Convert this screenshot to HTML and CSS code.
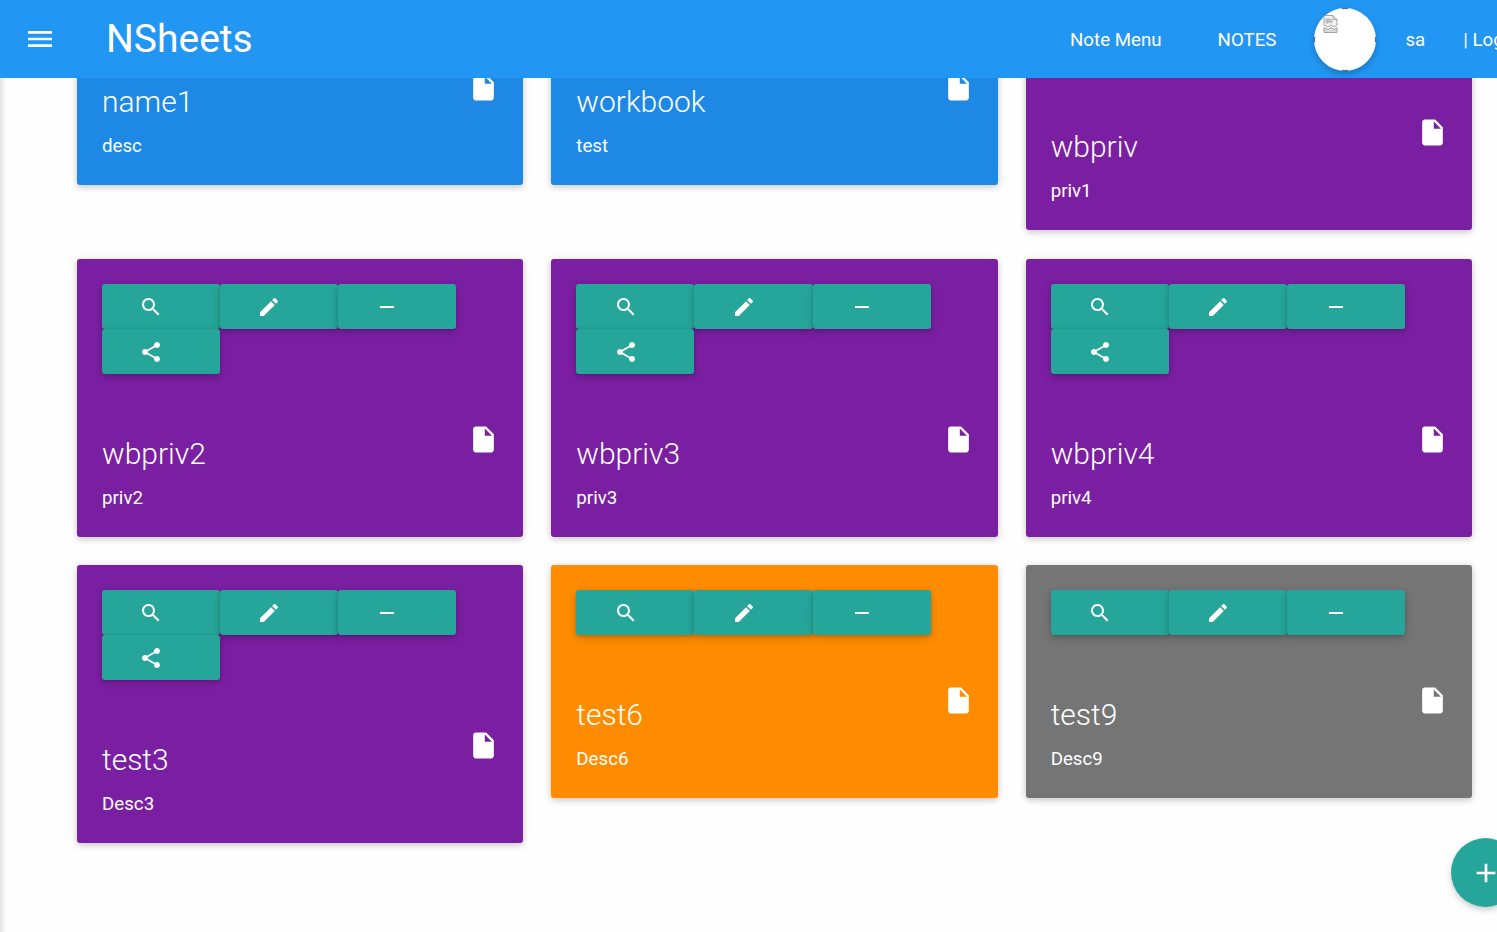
FILE: index.html
```html
<!DOCTYPE html>
<html lang="en">
<head>
  <meta charset="UTF-8">
  <title>NSheets</title>
  <link rel="stylesheet" href="styles.css">
</head>
<body>

  <svg class="icon-defs" width="0" height="0">
    <symbol id="i-menu" viewBox="0 0 24 24"><path d="M3 18h18v-2H3v2zm0-5h18v-2H3v2zm0-7v2h18V6H3z"/></symbol>
    <symbol id="i-search" viewBox="0 0 24 24"><path d="M15.5 14h-.79l-.28-.27C15.41 12.59 16 11.11 16 9.5 16 5.91 13.09 3 9.5 3S3 5.91 3 9.5 5.91 16 9.5 16c1.61 0 3.09-.59 4.23-1.57l.27.28v.79l5 4.99L20.49 19l-4.99-5zm-6 0C7.01 14 5 11.99 5 9.5S7.01 5 9.5 5 14 7.01 14 9.5 11.99 14 9.5 14z"/></symbol>
    <symbol id="i-edit" viewBox="0 0 24 24"><path d="M3 17.25V21h3.75L17.81 9.94l-3.75-3.75L3 17.25zM20.71 7.04c.39-.39.39-1.02 0-1.41l-2.34-2.34c-.39-.39-1.02-.39-1.41 0l-1.83 1.83 3.75 3.75 1.83-1.83z"/></symbol>
    <symbol id="i-remove" viewBox="0 0 24 24"><path d="M19 13H5v-2h14v2z"/></symbol>
    <symbol id="i-share" viewBox="0 0 24 24"><path d="M18 16.08c-.76 0-1.44.3-1.96.77L8.91 12.7c.05-.23.09-.46.09-.7s-.04-.47-.09-.7l7.05-4.11c.54.5 1.25.81 2.04.81 1.66 0 3-1.34 3-3s-1.34-3-3-3-3 1.34-3 3c0 .24.04.47.09.7L8.04 9.81C7.5 9.31 6.79 9 6 9c-1.66 0-3 1.34-3 3s1.34 3 3 3c.79 0 1.5-.31 2.04-.81l7.12 4.16c-.05.21-.08.43-.08.65 0 1.61 1.31 2.92 2.92 2.92 1.61 0 2.92-1.31 2.92-2.92s-1.31-2.92-2.92-2.92z"/></symbol>
    <symbol id="i-file" viewBox="0 0 24 24"><path d="M6 2c-1.1 0-1.99.9-1.99 2L4 20c0 1.1.89 2 1.99 2H18c1.1 0 2-.9 2-2V8l-6-6H6zm7 7V3.5L18.5 9H13z"/></symbol>
    <symbol id="i-add" viewBox="0 0 24 24"><path d="M19 13h-6v6h-2v-6H5v-2h6V5h2v6h6v2z"/></symbol>
  </svg>

  <header class="topbar">
    <button class="menu-btn"><svg class="icon-lg"><use href="#i-menu"/></svg></button>
    <div class="brand">NSheets</div>
    <nav class="topnav">
      <a class="nav-note">Note Menu</a>
      <a class="nav-notes">NOTES</a>
      <div class="avatar">
        <svg class="broken-img" viewBox="0 0 16 18">
          <path d="M1.5 .5h9l4 4v5.5l-3 2-3-2-3 2-4-2z" fill="#f4f4f4" stroke="#a2a2a2"/>
          <path d="M10.5 .5v4h4" fill="none" stroke="#a2a2a2"/>
          <path d="M3 3.5h5l2 2v3l-3-1-3 1.5-1-1z" fill="#bdbdbd"/>
          <path d="M1.5 12.5l4 2 3-2 3 2 3-2v5h-13z" fill="#dadada" stroke="#a2a2a2"/>
        </svg>
      </div>
      <a class="nav-user">sa</a>
      <a class="nav-logout">| Logout</a>
    </nav>
  </header>

  <main class="sheet-grid">

    <section class="card blue">
      <div class="card-actions">
        <button class="act"><svg class="icon"><use href="#i-search"/></svg></button>
        <button class="act"><svg class="icon"><use href="#i-edit"/></svg></button>
        <button class="act"><svg class="icon"><use href="#i-remove"/></svg></button>
      </div>
      <div class="card-body">
        <div><h3 class="card-title">name1</h3><p class="card-desc">desc</p></div>
        <svg class="file-icon"><use href="#i-file"/></svg>
      </div>
    </section>

    <section class="card blue">
      <div class="card-actions">
        <button class="act"><svg class="icon"><use href="#i-search"/></svg></button>
        <button class="act"><svg class="icon"><use href="#i-edit"/></svg></button>
        <button class="act"><svg class="icon"><use href="#i-remove"/></svg></button>
      </div>
      <div class="card-body">
        <div><h3 class="card-title">workbook</h3><p class="card-desc">test</p></div>
        <svg class="file-icon"><use href="#i-file"/></svg>
      </div>
    </section>

    <section class="card purple">
      <div class="card-actions">
        <button class="act"><svg class="icon"><use href="#i-search"/></svg></button>
        <button class="act"><svg class="icon"><use href="#i-edit"/></svg></button>
        <button class="act"><svg class="icon"><use href="#i-remove"/></svg></button>
        <button class="act"><svg class="icon"><use href="#i-share"/></svg></button>
      </div>
      <div class="card-body">
        <div><h3 class="card-title">wbpriv</h3><p class="card-desc">priv1</p></div>
        <svg class="file-icon"><use href="#i-file"/></svg>
      </div>
    </section>

    <section class="card purple">
      <div class="card-actions">
        <button class="act"><svg class="icon"><use href="#i-search"/></svg></button>
        <button class="act"><svg class="icon"><use href="#i-edit"/></svg></button>
        <button class="act"><svg class="icon"><use href="#i-remove"/></svg></button>
        <button class="act"><svg class="icon"><use href="#i-share"/></svg></button>
      </div>
      <div class="card-body">
        <div><h3 class="card-title">wbpriv2</h3><p class="card-desc">priv2</p></div>
        <svg class="file-icon"><use href="#i-file"/></svg>
      </div>
    </section>

    <section class="card purple">
      <div class="card-actions">
        <button class="act"><svg class="icon"><use href="#i-search"/></svg></button>
        <button class="act"><svg class="icon"><use href="#i-edit"/></svg></button>
        <button class="act"><svg class="icon"><use href="#i-remove"/></svg></button>
        <button class="act"><svg class="icon"><use href="#i-share"/></svg></button>
      </div>
      <div class="card-body">
        <div><h3 class="card-title">wbpriv3</h3><p class="card-desc">priv3</p></div>
        <svg class="file-icon"><use href="#i-file"/></svg>
      </div>
    </section>

    <section class="card purple">
      <div class="card-actions">
        <button class="act"><svg class="icon"><use href="#i-search"/></svg></button>
        <button class="act"><svg class="icon"><use href="#i-edit"/></svg></button>
        <button class="act"><svg class="icon"><use href="#i-remove"/></svg></button>
        <button class="act"><svg class="icon"><use href="#i-share"/></svg></button>
      </div>
      <div class="card-body">
        <div><h3 class="card-title">wbpriv4</h3><p class="card-desc">priv4</p></div>
        <svg class="file-icon"><use href="#i-file"/></svg>
      </div>
    </section>

    <section class="card purple">
      <div class="card-actions">
        <button class="act"><svg class="icon"><use href="#i-search"/></svg></button>
        <button class="act"><svg class="icon"><use href="#i-edit"/></svg></button>
        <button class="act"><svg class="icon"><use href="#i-remove"/></svg></button>
        <button class="act"><svg class="icon"><use href="#i-share"/></svg></button>
      </div>
      <div class="card-body">
        <div><h3 class="card-title">test3</h3><p class="card-desc">Desc3</p></div>
        <svg class="file-icon"><use href="#i-file"/></svg>
      </div>
    </section>

    <section class="card orange">
      <div class="card-actions">
        <button class="act"><svg class="icon"><use href="#i-search"/></svg></button>
        <button class="act"><svg class="icon"><use href="#i-edit"/></svg></button>
        <button class="act"><svg class="icon"><use href="#i-remove"/></svg></button>
      </div>
      <div class="card-body">
        <div><h3 class="card-title">test6</h3><p class="card-desc">Desc6</p></div>
        <svg class="file-icon"><use href="#i-file"/></svg>
      </div>
    </section>

    <section class="card grey">
      <div class="card-actions">
        <button class="act"><svg class="icon"><use href="#i-search"/></svg></button>
        <button class="act"><svg class="icon"><use href="#i-edit"/></svg></button>
        <button class="act"><svg class="icon"><use href="#i-remove"/></svg></button>
      </div>
      <div class="card-body">
        <div><h3 class="card-title">test9</h3><p class="card-desc">Desc9</p></div>
        <svg class="file-icon"><use href="#i-file"/></svg>
      </div>
    </section>

  </main>

  <button class="fab"><svg class="icon-lg"><use href="#i-add"/></svg></button>

</body>
</html>
```

FILE: styles.css
```css
html, body {
  margin: 0;
  height: 100%;
  overflow: hidden;
}
body {
  font-family: Roboto, "Liberation Sans", sans-serif;
  background: #fefefe;
  color: #fff;
  box-shadow: inset 6px 0 4px -3px #e2e2e2;
}
button {
  border: 0;
  padding: 0;
  color: inherit;
  font: inherit;
}
svg {
  fill: currentColor;
  display: block;
}
.icon-defs {
  position: absolute;
}
.icon {
  width: 24px;
  height: 24px;
}
.icon-lg {
  width: 32px;
  height: 32px;
}

/* Top bar */
.topbar {
  position: fixed;
  top: 0;
  left: 0;
  right: 0;
  z-index: 5;
  height: 78px;
  display: flex;
  align-items: center;
  overflow: hidden;
  background: #2196f3;
}
.menu-btn {
  flex: none;
  margin-left: 24px;
  background: none;
}
.brand {
  flex: none;
  width: 964px;
  margin-left: 50px;
  font-size: 39px;
  line-height: 78px;
}
.topnav {
  flex: none;
  display: flex;
  align-items: center;
  font-size: 18.72px;
  white-space: nowrap;
}
.topnav a {
  margin-top: 2px;
}
.nav-note {
  margin-right: 56px;
}
.nav-notes {
  margin-right: 38px;
}
.avatar {
  flex: none;
  position: relative;
  width: 62px;
  height: 63px;
  overflow: hidden;
  border-radius: 50%;
  /* thin dark slivers where the round image clips its border */
  background: conic-gradient(#666 0 5deg, #fff 5deg 85deg, #666 85deg 95deg, #fff 95deg 175deg, #666 175deg 185deg, #fff 185deg 265deg, #666 265deg 275deg, #fff 275deg 355deg, #666 355deg);
  box-shadow: 0 3px 6px rgba(0, 0, 0, .22);
  margin-right: 29px;
}
.avatar::before {
  content: "";
  position: absolute;
  inset: 1px;
  border-radius: 50%;
  background: #fff;
}
.broken-img {
  position: relative;
  width: 17px;
  height: 18px;
  margin: 7px 0 0 8px;
}
.nav-user {
  margin-right: 38px;
}

/* Cards */
.sheet-grid {
  display: grid;
  grid-template-columns: repeat(3, 1fr);
  align-items: start;
  column-gap: 28px;
  row-gap: 28.1px;
  margin: -47.6px 25px 0 77px;
}
.card {
  padding: 25px 25px 27px;
  border-radius: 3px;
  box-shadow: 0 3px 6px rgba(0, 0, 0, .14), 0 0 8px rgba(0, 0, 0, .1);
}
.blue { background: #1e88e5; }
.purple { background: #7b1fa2; }
.orange { background: #ff8c00; }
.grey { background: #757575; }

.card-actions {
  display: flex;
  flex-wrap: wrap;
}
.act {
  width: 118.1px;
  height: 45px;
  padding: 2px 0 0 37.3px;
  background: #26a69a;
  border-radius: 3px;
  box-shadow: 0 3px 8px rgba(0, 0, 0, .2), 0 1px 3px rgba(0, 0, 0, .12);
}
.card-body {
  display: flex;
  justify-content: space-between;
  align-items: flex-start;
  margin-top: 62px;
}
.card-title {
  margin: 0;
  font-size: 30px;
  font-weight: 300;
  line-height: 36px;
}
.card-desc {
  margin: 14px 0 0;
  font-size: 18.72px;
  line-height: 24px;
}
.file-icon {
  width: 31px;
  height: 31px;
  margin-right: -1px;
  margin-top: -12px;
}

/* Add button */
.fab {
  position: fixed;
  left: 1451px;
  top: 838px;
  width: 69px;
  height: 69px;
  border-radius: 50%;
  background: #26a69a;
  box-shadow: 0 3px 6px rgba(0, 0, 0, .2);
  display: flex;
  align-items: center;
  justify-content: center;
}
```
